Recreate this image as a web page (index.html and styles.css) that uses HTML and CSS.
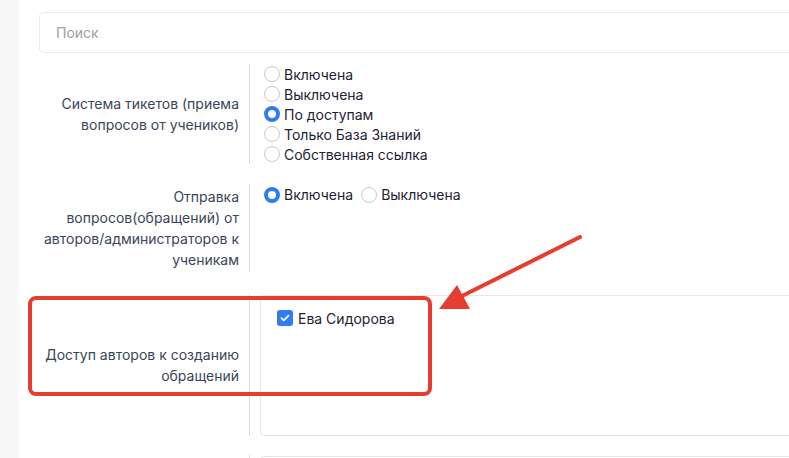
FILE: index.html
```html
<!DOCTYPE html>
<html lang="ru">
<head>
    <meta charset="UTF-8">
    <meta name="viewport" content="width=device-width, initial-scale=1.0">
    <title>Настройки обращений</title>
    <link rel="stylesheet" href="styles.css">
</head>
<body>
    <div class="card">
        <div class="search">Поиск</div>

        <div class="row row-tickets">
            <div class="row-label">Система тикетов (приема вопросов от учеников)</div>
            <div class="row-field">
                <div class="option"><span class="radio"></span>Включена</div>
                <div class="option"><span class="radio"></span>Выключена</div>
                <div class="option"><span class="radio checked"></span>По доступам</div>
                <div class="option"><span class="radio"></span>Только База Знаний</div>
                <div class="option"><span class="radio"></span>Собственная ссылка</div>
            </div>
        </div>

        <div class="row row-send">
            <div class="row-label">Отправка вопросов(обращений) от авторов/администраторов к ученикам</div>
            <div class="row-field inline">
                <div class="option"><span class="radio checked"></span>Включена</div>
                <div class="option"><span class="radio"></span>Выключена</div>
            </div>
        </div>

        <div class="row row-access">
            <div class="row-label">Доступ авторов к созданию обращений</div>
            <div class="row-field boxed">
                <div class="box">
                    <div class="option"><span class="checkbox">
                        <svg width="10" height="8" viewBox="0 0 10 8"><path d="M1.5 4.2 L3.8 6.3 L8.5 1.6" fill="none" stroke="#fff" stroke-width="1.8" stroke-linecap="round" stroke-linejoin="round"/></svg>
                    </span>Ева Сидорова</div>
                </div>
            </div>
        </div>

        <div class="row row-next">
            <div class="row-label"></div>
            <div class="row-field boxed">
                <div class="box"></div>
            </div>
        </div>
    </div>

    <!-- пометка поверх скриншота -->
    <div class="mark-frame"></div>
    <svg class="mark-arrow" width="789" height="458" viewBox="0 0 789 458">
        <line x1="580" y1="237" x2="458" y2="298" stroke="#e53d30" stroke-width="4" stroke-linecap="round"/>
        <polygon points="439,309 457,285 470,309" fill="#e53d30"/>
    </svg>
</body>
</html>
```

FILE: styles.css
```css
body {
    margin: 0;
    background: #f7f7f8;
    font-family: Inter, 'Noto Sans', sans-serif;
    font-size: 14px;
    height: 458px;
    overflow: hidden;
    position: relative;
}

.card {
    margin-left: 19px;
    background: #ffffff;
    padding: 12px 0 0 20px;
    height: 458px;
    overflow: hidden;
    box-sizing: border-box;
}

.search {
    height: 41px;
    border: 1px solid #ebebed;
    border-right: none;
    border-radius: 5px 0 0 5px;
    box-sizing: border-box;
    padding-left: 16px;
    line-height: 39px;
    color: #9b9ea3;
    margin-bottom: 11px;
}

.row {
    display: flex;
    margin-bottom: 20px;
}

.row-label {
    width: 200px;
    padding-right: 10px;
    display: flex;
    align-items: center;
    justify-content: flex-end;
    text-align: right;
    line-height: 21px;
    color: #3a4557;
}

.row-field {
    flex: 1;
    border-left: 1px solid #dcdcdf;
    padding-left: 14px;
    color: #1d2333;
}

.option {
    display: flex;
    align-items: center;
    height: 20px;
}

.row-send {
    margin-bottom: 22px;
}

.row-send .row-label {
    padding-top: 2px;
    padding-bottom: 2px;
}

.row-field.inline {
    display: flex;
    align-items: flex-start;
    gap: 8px;
}

.row-field.inline .option {
    height: 21px;
}

.radio {
    width: 16px;
    height: 16px;
    border: 1px solid #c9cacd;
    border-radius: 50%;
    box-sizing: border-box;
    margin-right: 4px;
    background: #ffffff;
    flex: none;
}

.radio.checked {
    border: 4.5px solid #2d7cf6;
}

.row-field.boxed {
    padding-left: 10px;
    padding-top: 1px;
}

.box {
    height: 141px;
    border: 1px solid #e6e6ea;
    border-right: none;
    border-radius: 5px 0 0 5px;
    box-sizing: border-box;
    padding: 12px 0 0 16px;
}

.checkbox {
    width: 16px;
    height: 16px;
    border-radius: 3px;
    background: #2f7cf5;
    margin-right: 5px;
    display: flex;
    align-items: center;
    justify-content: center;
    flex: none;
}

.row-access {
    margin-bottom: 19px;
}

.row-next .box {
    height: 40px;
}

.mark-frame {
    position: absolute;
    left: 28px;
    top: 296px;
    width: 404px;
    height: 100px;
    border: 4px solid #e53d30;
    border-radius: 8px;
    box-sizing: border-box;
}

.mark-arrow {
    position: absolute;
    left: 0;
    top: 0;
}
```
